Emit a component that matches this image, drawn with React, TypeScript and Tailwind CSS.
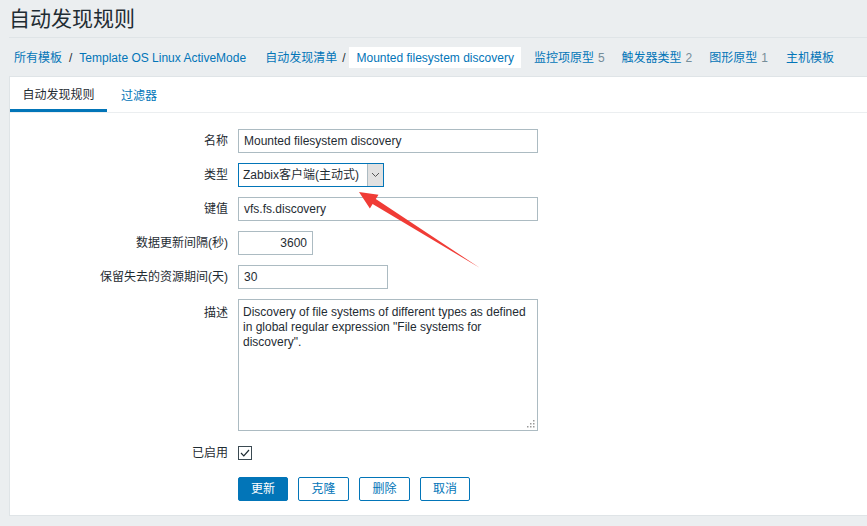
const font = '"Liberation Sans", Arial, "Noto Sans CJK SC", sans-serif';

function Crumb({ children, count }: { children: React.ReactNode; count?: number }) {
  return (
    <span className="text-[#0275b8]">
      {children}
      {count !== undefined ? <span className="ml-[4px] text-[#768d99]">{count}</span> : null}
    </span>
  );
}

function Label({ children, top }: { children: React.ReactNode; top?: boolean }) {
  return (
    <div className={`text-right text-[12px] text-[#1f2c33] ${top ? "self-start pt-[5px]" : "self-center"}`}>
      {children}
    </div>
  );
}

const inputCls =
  "h-[24px] border border-[#acbbc2] bg-white px-[5px] text-[12px] text-[#1f2c33] flex items-center";

export default function App() {
  return (
    <div className="relative min-h-[526px] w-[867px] overflow-hidden bg-[#ebeef0]" style={{ fontFamily: font }}>
      {/* header */}
      <div className="pl-[9px]">
        <div className="flex h-[38px] items-center border-b border-[#dfe4e7]">
          <h1 className="text-[21px] leading-none text-[#1f2c33]">自动发现规则</h1>
        </div>
        <div className="flex h-[39px] items-center border-b border-[#dfe4e7] pt-[1px] pl-[5px] text-[12px] whitespace-nowrap">
          <Crumb>所有模板</Crumb>
          <span className="mx-[7px] text-[#1f2c33]">/</span>
          <Crumb>Template OS Linux ActiveMode</Crumb>
          <span className="ml-[19px]">
            <Crumb>自动发现清单</Crumb>
          </span>
          <span className="mr-[4px] ml-[5px] text-[#1f2c33]">/</span>
          <span className="flex h-[21px] items-center bg-white px-[7px] text-[#0275b8]">
            Mounted filesystem discovery
          </span>
          <span className="ml-[13px]">
            <Crumb count={5}>监控项原型</Crumb>
          </span>
          <span className="ml-[17px]">
            <Crumb count={2}>触发器类型</Crumb>
          </span>
          <span className="ml-[17px]">
            <Crumb count={1}>图形原型</Crumb>
          </span>
          <span className="ml-[18px]">
            <Crumb>主机模板</Crumb>
          </span>
        </div>
      </div>

      {/* card */}
      <div className="ml-[9px] h-[439px] border-b border-l border-[#dfe4e7] bg-white">
        <div className="flex h-[36px] border-b border-[#ebeef0] text-[12px]">
          <div className="flex w-[97px] items-center justify-center border-b-[3px] border-[#0275b8] pt-[3px] text-[#1f2c33]">
            自动发现规则
          </div>
          <div className="flex items-center px-[14px] pt-[2px] text-[#0275b8]">过滤器</div>
        </div>

        <div className="grid grid-cols-[218px_300px] gap-x-[10px] gap-y-[10px] pt-[16px]">
          <Label>名称</Label>
          <div className={inputCls}>Mounted filesystem discovery</div>

          <Label>类型</Label>
          <div className="flex h-[24px] w-[146px] border border-[#0275b8] bg-white text-[12px] text-[#1f2c33]">
            <div className="flex flex-1 items-center pl-[4px]">Zabbix客户端(主动式)</div>
            <div className="flex w-[16px] items-center justify-center border-l border-[#acbbc2] bg-[#e1e1e1]">
              <svg width="9" height="6" viewBox="0 0 9 6">
                <path d="M1 1l3.5 3.5L8 1" fill="none" stroke="#555" strokeWidth="1" />
              </svg>
            </div>
          </div>

          <Label>键值</Label>
          <div className={inputCls}>vfs.fs.discovery</div>

          <Label>数据更新间隔(秒)</Label>
          <div className={`${inputCls} w-[75px] justify-end`}>3600</div>

          <Label>保留失去的资源期间(天)</Label>
          <div className={`${inputCls} w-[150px]`}>30</div>

          <Label top>描述</Label>
          <div className="relative h-[132px] border border-[#acbbc2] bg-white px-[4px] pt-[5px] text-[12px] leading-[15px] text-[#1f2c33]">
            Discovery of file systems of different types as defined in global regular expression "File systems for
            discovery".
            <svg className="absolute right-[2px] bottom-[2px]" width="8" height="8" viewBox="0 0 8 8">
              <rect x="6" y="0" width="1.5" height="1.5" fill="#999" />
              <rect x="3" y="3" width="1.5" height="1.5" fill="#999" />
              <rect x="6" y="3" width="1.5" height="1.5" fill="#999" />
              <rect x="0" y="6" width="1.5" height="1.5" fill="#999" />
              <rect x="3" y="6" width="1.5" height="1.5" fill="#999" />
              <rect x="6" y="6" width="1.5" height="1.5" fill="#999" />
            </svg>
          </div>

          <Label>已启用</Label>
          <div className="flex h-[24px] items-center">
            <div className="flex h-[14px] w-[14px] items-center justify-center border border-[#3b4a52] bg-white">
              <svg width="10" height="8" viewBox="0 0 10 8">
                <path d="M1 4l2.8 2.8L9 1" fill="none" stroke="#1f2c33" strokeWidth="1.2" />
              </svg>
            </div>
          </div>

          <div />
          <div className="mt-[2px] flex gap-[10px] text-[12px]">
            <button className="h-[24px] w-[50px] rounded-[2px] border border-[#0275b8] bg-[#0275b8] text-white">
              更新
            </button>
            <button className="h-[24px] w-[51px] rounded-[2px] border border-[#0275b8] bg-white text-[#0275b8]">
              克隆
            </button>
            <button className="h-[24px] w-[51px] rounded-[2px] border border-[#0275b8] bg-white text-[#0275b8]">
              删除
            </button>
            <button className="h-[24px] w-[50px] rounded-[2px] border border-[#0275b8] bg-white text-[#0275b8]">
              取消
            </button>
          </div>
        </div>
      </div>

      {/* annotation arrow */}
      <svg className="pointer-events-none absolute top-0 left-0" width="867" height="526">
        <polygon
          points="359,192 378.5,194.8 375.8,199.1 480,268 372.6,204.1 369.9,208.4"
          fill="#f03c36"
        />
      </svg>
    </div>
  );
}
